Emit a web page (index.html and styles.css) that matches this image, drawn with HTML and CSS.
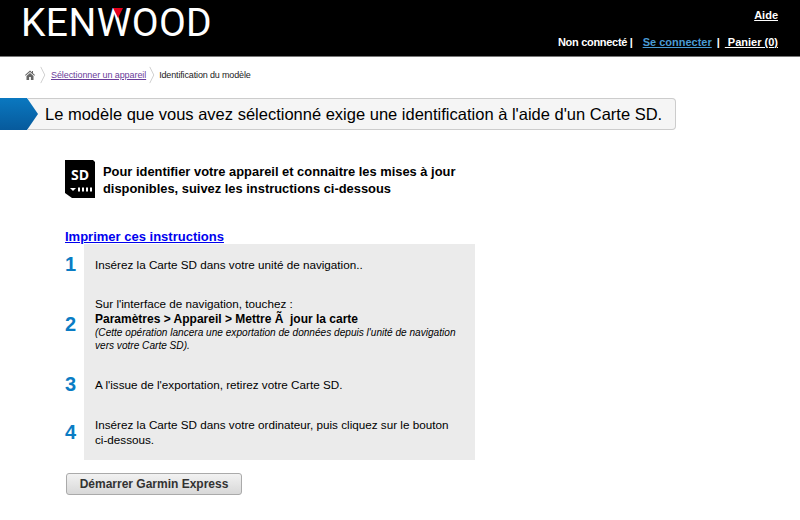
FILE: index.html
```html
<!DOCTYPE html>
<html lang="fr">

<head>
  <meta charset="UTF-8" />
  <title>Identification du modèle</title>
  <link rel="stylesheet" href="styles.css">
</head>

<body>
  <header class="header">
    <div class="logo">KENWOOD<span class="logo-mark"></span></div>
    <div class="account">
      <a href="#" class="account-link">Aide</a>
      <div class="account-row">
        <span class="account-status">Non connecté |</span>
        <a href="#" class="login">Se connecter</a>
        <span>|</span>
        <a href="#" class="account-link">&nbsp;Panier (0)</a>
      </div>
    </div>
  </header>

  <nav class="crumbs">
    <svg class="home" viewBox="0 0 10 10" width="10" height="10">
      <path d="M5 .5 0 5l.6.7L5 2l4.400 3.700.6-.7-2-1.800V1H7v1.300zM1.500 6v4h2.600V7h1.800v3h2.600V6L5 3z" fill="#666" />
    </svg>
    <svg class="sep" viewBox="0 0 6 20" width="6" height="18">
      <path d="M.5 1 5 10 .5 19" fill="none" stroke="#ccc" />
    </svg>
    <a href="#" class="crumb-link">Sélectionner un appareil</a>
    <svg class="sep sep-last" viewBox="0 0 6 20" width="6" height="18">
      <path d="M.5 1 5 10 .5 19" fill="none" stroke="#ccc" />
    </svg>
    <span class="crumb-current">Identification du modèle</span>
  </nav>

  <div class="banner">
    <div class="banner-arrow"></div>
    <h1 class="banner-title">Le modèle que vous avez sélectionné exige une identification à l'aide d'un Carte SD.</h1>
  </div>

  <main class="content">
    <div class="intro">
      <svg class="sd" viewBox="0 0 30 38" width="30" height="38">
        <path d="M0 0h28l2 2v36H7l-7-5z" fill="#000" />
        <text x="15" y="20" text-anchor="middle" class="sd-text">SD</text>
        <path d="M5 28h6l-3 3z" fill="#fff" />
        <path d="M13 27.500h2v4h-2zM17 27.500h2v4h-2zM21 27.500h2v4h-2zM25 27.500h2v4h-2z" fill="#fff" />
      </svg>
      <p class="intro-text">Pour identifier votre appareil et connaitre les mises à jour disponibles, suivez les instructions ci-dessous</p>
    </div>

    <a href="#" class="print">Imprimer ces instructions</a>

    <ol class="steps">
      <li class="step step-1">
        <span class="step-num">1</span>
        <div class="step-body">Insérez la Carte SD dans votre unité de navigation..</div>
      </li>
      <li class="step step-2">
        <span class="step-num">2</span>
        <div class="step-body">
          <span>Sur l'interface de navigation, touchez :</span>
          <strong class="step-path">Paramètres &gt; Appareil &gt; Mettre Ã&nbsp; jour la carte</strong>
          <em class="step-note">(Cette opération lancera une exportation de données depuis l'unité de navigation vers votre Carte SD).</em>
        </div>
      </li>
      <li class="step step-3">
        <span class="step-num">3</span>
        <div class="step-body">A l'issue de l'exportation, retirez votre Carte SD.</div>
      </li>
      <li class="step step-4">
        <span class="step-num">4</span>
        <div class="step-body"><span>Insérez la Carte SD dans votre ordinateur, puis cliquez sur le bouton <span class="nowrap">ci-dessous.</span></span></div>
      </li>
    </ol>

    <button class="start">Démarrer Garmin Express</button>
  </main>
</body>

</html>
```
FILE: styles.css
```css
* {
  box-sizing: border-box;
}

html,
body {
  height: 520px;
  overflow: hidden;
}

body {
  margin: 0;
  background-color: #fff;
  color: #000;
  font-family: "Liberation Sans", Arial, sans-serif;
  font-size: 12px;
}

.header {
  display: flex;
  justify-content: space-between;
  height: 57px;
  padding: 0 22px 0 21px;
  background-color: #000;
  border-bottom: 1px solid #777;
  color: #fff;
}

.logo {
  position: relative;
  align-self: flex-start;
  font-family: Roboto, sans-serif;
  font-size: 39px;
  font-weight: 400;
  line-height: 46px;
  letter-spacing: .4px;
}

.logo-mark {
  position: absolute;
  top: 8px;
  left: 92px;
  border-top: 10px solid #e2001a;
  border-left: 5px solid transparent;
  border-right: 5px solid transparent;
}

.account {
  display: flex;
  flex-direction: column;
  align-items: flex-end;
  padding-top: 9px;
  font-size: 11px;
  font-weight: bold;
}

.account a {
  text-decoration: underline;
}

.account-link {
  color: #fff;
}

.account-row {
  display: flex;
  gap: 5px;
  margin-top: 15px;
}

.account-status {
  letter-spacing: -.3px;
}

.login {
  margin-left: 5px;
  color: #4a9bd4;
}

.crumbs {
  display: flex;
  align-items: center;
  gap: 5px;
  height: 20px;
  margin-top: 8px;
  padding-left: 25px;
  font-size: 9px;
  color: #222;
}

.sep-last {
  margin: 0 -1px 0 -2px;
}

.crumb-link {
  color: #6a3d9a;
  letter-spacing: -.08px;
}

.crumb-current {
  letter-spacing: -.15px;
}

.banner {
  display: flex;
  margin-top: 13px;
  height: 32px;
}

.banner-arrow {
  position: relative;
  z-index: 1;
  width: 38px;
  background: linear-gradient(#0a78c0, #075a9c);
  clip-path: polygon(0 0, 27px 0, 38px 50%, 27px 100%, 0 100%);
}

.banner-title {
  width: 648px;
  margin: 0 0 0 -10px;
  padding-left: 17px;
  background-color: #f5f5f5;
  border: 1px solid #ccc;
  border-left: 0;
  border-radius: 0 4px 4px 0;
  font-size: 16.500px;
  font-weight: normal;
  line-height: 30px;
}

.content {
  width: 420px;
  margin-left: 65px;
}

.intro {
  display: flex;
  gap: 8px;
  margin-top: 30px;
}

.sd-text {
  fill: #fff;
  font-family: "Open Sans", sans-serif;
  font-size: 14px;
  font-weight: bold;
}

.intro-text {
  width: 360px;
  margin: 3px 0 0;
  font-size: 12.900px;
  font-weight: bold;
  line-height: 17px;
}

.print {
  display: block;
  margin-top: 31px;
  color: #00e;
  font-size: 13px;
  font-weight: bold;
  line-height: 15px;
}

.steps {
  margin: 0;
  padding: 0;
  list-style: none;
}

.step {
  display: flex;
  align-items: center;
}

.step-num {
  width: 19px;
  color: #0a7cc4;
  font-size: 20px;
  font-weight: bold;
  line-height: 24px;
}

.step-body {
  display: flex;
  flex-direction: column;
  justify-content: center;
  align-self: stretch;
  width: 391px;
  padding: 0 11px;
  background-color: #ebebeb;
  font-size: 11.700px;
  line-height: 15px;
}

.step-1,
.step-3 {
  height: 40px;
}

.step-2 {
  height: 80px;
}

.step-4 {
  height: 56px;
}

.nowrap {
  white-space: nowrap;
}

.step-path {
  margin-top: 1px;
  font-size: 12px;
  line-height: 14px;
}

.step-note {
  font-size: 10.100px;
  line-height: 13px;
}

.start {
  display: block;
  width: 176px;
  height: 22px;
  margin: 13px 0 0 1px;
  padding: 0;
  background: linear-gradient(#f2f2f2, #d8d8d8);
  border: 1px solid #aaa;
  border-radius: 3px;
  color: #333;
  font-family: "Liberation Sans", Arial, sans-serif;
  font-size: 12px;
  font-weight: bold;
}
```
